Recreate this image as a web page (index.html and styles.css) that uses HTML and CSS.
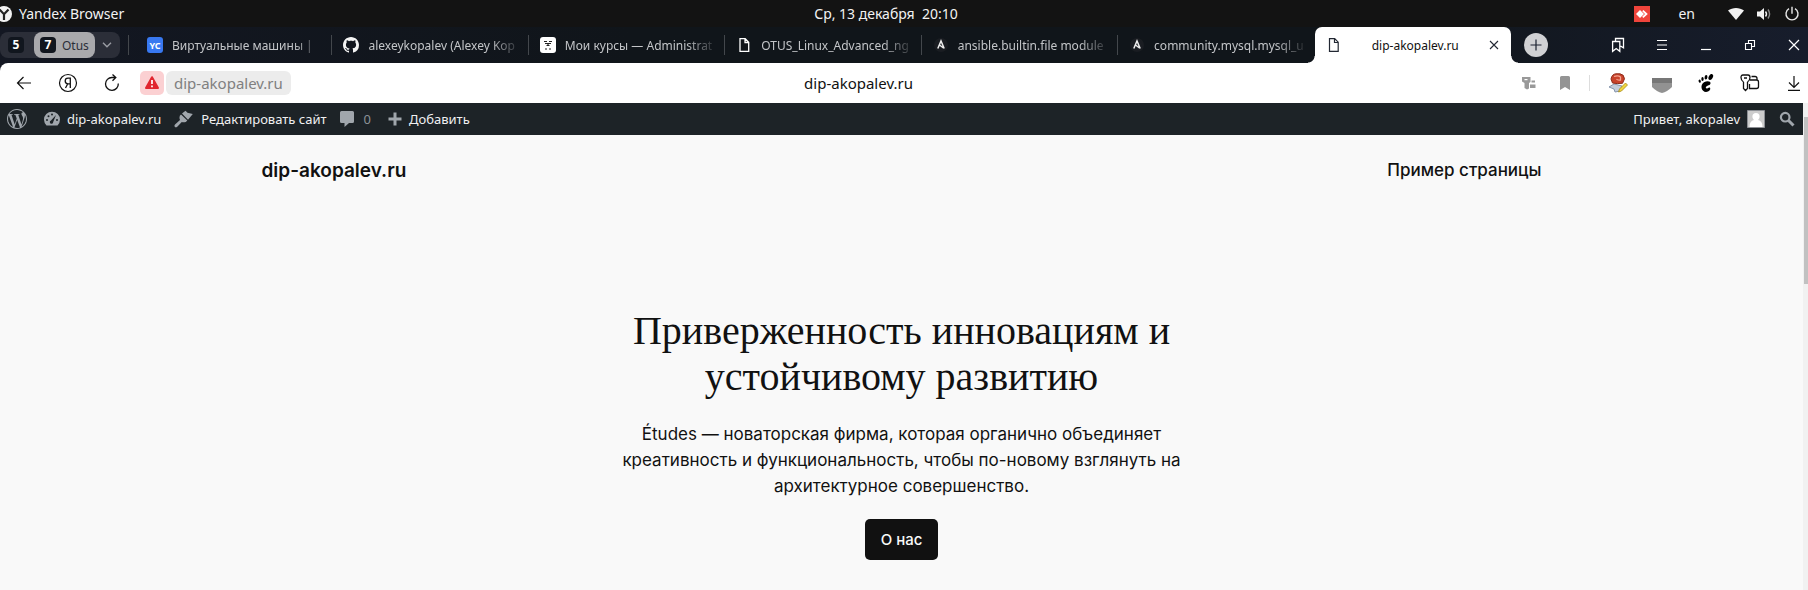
FILE: index.html
```html
<!DOCTYPE html>
<html lang="ru">
<head>
<meta charset="utf-8">
<meta name="viewport" content="width=device-width, initial-scale=1">
<title>dip-akopalev.ru</title>
<link rel="stylesheet" href="styles.css">
</head>
<body>
<div class="desktop-bar">
  <div class="desktop-app">
    <svg class="app-logo" width="16" height="16" viewBox="0 0 16 16"><circle cx="8" cy="8" r="8" fill="#f2f2f2"/><path d="M3.500 3.500 8 8.200l4.500-4.700M8 8v6" fill="none" stroke="#222" stroke-width="2.200"/></svg>
    <span>Yandex Browser</span>
  </div>
  <time class="clock">Ср, 13 декабря&nbsp; 20:10</time>
  <div class="tray">
    <svg width="16" height="16" viewBox="0 0 16 16"><path fill="#ef443b" d="M0 0h16v16H0z"/><path fill="#fff" d="m6 4 4 4-4 4-4-4z"/><path fill="#fff" d="m8.200 5.200 1.200-1.200L13.800 8l-4.400 4-1.200-1.200L11 8z"/></svg>
    <span class="lang">en</span>
    <div class="status">
      <svg width="16" height="16" viewBox="0 0 16 16"><path fill="#f2f2f2" d="M0 4.500C4.500 1 11.500 1 16 4.500L8 14z"/></svg>
      <svg width="16" height="16" viewBox="0 0 16 16"><path fill="#f2f2f2" d="M1 5.500h3L8 2v12l-4-3.500H1z"/><path d="M9.500 5.500q2 2.500 0 5" fill="none" stroke="#f2f2f2" stroke-width="1.400"/><path d="M12 3.500q3.200 4.500 0 9" fill="none" stroke="#888" stroke-width="1.400"/></svg>
      <svg width="16" height="16" viewBox="0 0 16 16"><path d="M5 2.700a6 6 0 1 0 6 0M8 .8v7" fill="none" stroke="#e8e8e8" stroke-width="1.400"/></svg>
    </div>
  </div>
</div>

<div class="tab-strip">
  <div class="tab-groups">
    <button class="group"><span class="count">5</span></button>
    <button class="group group-open"><span class="count">7</span>Otus</button>
    <button class="group-more" aria-label="Группы"><svg width="10" height="6" viewBox="0 0 10 6"><path d="m1 .8 4 4 4-4" fill="none" stroke="#9a9ca3" stroke-width="1.400"/></svg></button>
  </div>
  <nav class="tabs">
    <a class="tab" href="#"><svg width="16" height="16" viewBox="0 0 16 16"><rect width="16" height="16" rx="3" fill="#3878f0"/><text x="8" y="11.500" class="yc" text-anchor="middle">YC</text></svg><span class="tab-title">Виртуальные машины |</span></a>
    <a class="tab" href="#"><svg width="16" height="16" viewBox="0 0 16 16"><path fill="#f4f4f4" d="M8 0C3.580 0 0 3.580 0 8c0 3.540 2.290 6.530 5.470 7.590.4.070.55-.17.55-.38 0-.19-.01-.82-.01-1.490-2.010.37-2.530-.49-2.690-.94-.09-.23-.48-.94-.82-1.130-.28-.15-.68-.52-.01-.53.63-.01 1.080.58 1.230.82.72 1.210 1.870.87 2.330.66.070-.52.28-.87.51-1.070-1.780-.2-3.640-.89-3.640-3.950 0-.87.31-1.590.82-2.150-.08-.2-.36-1.020.08-2.120 0 0 .67-.21 2.200.82.64-.18 1.320-.27 2-.27s1.360.09 2 .27c1.530-1.040 2.200-.82 2.200-.82.44 1.100.16 1.920.08 2.120.51.56.82 1.270.82 2.150 0 3.070-1.870 3.750-3.650 3.950.29.25.54.73.54 1.480 0 1.070-.01 1.930-.01 2.200 0 .21.15.46.55.38A8.010 8.010 0 0 0 16 8c0-4.420-3.580-8-8-8z"/></svg><span class="tab-title">alexeykopalev (Alexey Kop</span></a>
    <a class="tab" href="#"><svg width="16" height="16" viewBox="0 0 16 16"><rect width="16" height="16" rx="3" fill="#fff"/><path d="M4 4.500h3M9 4.500h3M5 6.500h6M8 6v3M6.500 8.500h3M5 12h2M9 12h2" stroke="#222" stroke-width="1.200"/></svg><span class="tab-title">Мои курсы — Administrat</span></a>
    <a class="tab" href="#"><svg width="16" height="16" viewBox="0 0 16 16"><path d="M4 1.700h5.200l3.500 3.500v9.100H4zM9 2v3.500h3.500" fill="none" stroke="#fff" stroke-width="1.300"/></svg><span class="tab-title">OTUS_Linux_Advanced_ng</span></a>
    <a class="tab" href="#"><svg width="16" height="16" viewBox="0 0 16 16"><circle cx="8" cy="8" r="7" fill="#1a1d22"/><path d="M4.800 11.500 8 4l3.200 7.500M6.500 8l4 3" fill="none" stroke="#eee" stroke-width="1.500"/></svg><span class="tab-title">ansible.builtin.file module</span></a>
    <a class="tab" href="#"><svg width="16" height="16" viewBox="0 0 16 16"><circle cx="8" cy="8" r="7" fill="#1a1d22"/><path d="M4.800 11.500 8 4l3.200 7.500M6.500 8l4 3" fill="none" stroke="#eee" stroke-width="1.500"/></svg><span class="tab-title">community.mysql.mysql_u</span></a>
    <div class="tab tab-active"><svg width="16" height="16" viewBox="0 0 16 16"><path d="M3.500 1.700h5.200l3.500 3.500v9.100H3.500zM8.500 2v3.500H12" fill="none" stroke="#222833" stroke-width="1.200"/></svg><span class="active-title">dip-akopalev.ru</span><button class="tab-close" aria-label="Закрыть вкладку"><svg width="10" height="10" viewBox="0 0 10 10"><path d="m1 1 8 8M9 1 1 9" stroke="#222833" stroke-width="1.100"/></svg></button></div>
  </nav>
  <button class="new-tab" aria-label="Новая вкладка"><svg width="12" height="12" viewBox="0 0 12 12"><path d="M6 .5v11M.5 6h11" stroke="#1a2130" stroke-width="1.200"/></svg></button>
  <div class="window-controls">
    <button class="tool" aria-label="Коллекции"><svg width="14" height="16" viewBox="0 0 14 16"><path d="M1.600 4.500h7.200v9.800L5.200 11.500l-3.600 2.800zM4.500 4V1.500h8v9.300L9.500 9" fill="none" stroke="#fff" stroke-width="1.300"/></svg></button>
    <button class="tool" aria-label="Меню"><svg width="12" height="12" viewBox="0 0 12 12"><path d="M1 1.500h10M1 6h10M1 10.500h10" stroke="#fff" stroke-width="1.200"/></svg></button>
    <button class="tool" aria-label="Свернуть"><svg width="12" height="12" viewBox="0 0 12 12"><path d="M1 10.500h10" stroke="#fff" stroke-width="1.200"/></svg></button>
    <button class="tool" aria-label="Развернуть"><svg width="12" height="12" viewBox="0 0 12 12"><path d="M1.500 4.500h6v6h-6zM4.500 4V1.500h6v6H8" fill="none" stroke="#fff" stroke-width="1.100"/></svg></button>
    <button class="tool" aria-label="Закрыть"><svg width="12" height="12" viewBox="0 0 12 12"><path d="m1 1 10 10M11 1 1 11" stroke="#fff" stroke-width="1.200"/></svg></button>
  </div>
</div>

<div class="toolbar">
  <button class="tool" aria-label="Назад"><svg width="16" height="14" viewBox="0 0 16 14"><path d="M15 7H1.500M7.500 1l-6 6 6 6" fill="none" stroke="#111" stroke-width="1.200"/></svg></button>
  <button class="tool" aria-label="Яндекс"><svg width="20" height="20" viewBox="0 0 20 20"><circle cx="10" cy="10" r="8.500" fill="none" stroke="#111" stroke-width="1.200"/><path d="M12.300 15V5.200H10a2.800 2.800 0 0 0 0 5.600h2.300M9.800 10.800 7.500 15" fill="none" stroke="#111" stroke-width="1.300"/></svg></button>
  <button class="tool" aria-label="Обновить"><svg width="18" height="18" viewBox="0 0 18 18"><path d="M15.300 9.500A6.400 6.400 0 1 1 9 3.500h3.800M9.500.5l3.300 3-3.300 3.200" fill="none" stroke="#111" stroke-width="1.300"/></svg></button>
  <div class="address">
    <div class="address-site">
      <button class="warning" aria-label="Небезопасное соединение"><svg width="14" height="14" viewBox="0 0 14 14"><path d="M7 1.200 13 12H1z" fill="#e1252f" stroke="#e1252f" stroke-width="2" stroke-linejoin="round"/><path d="M7 4v4M7 9.500v1.800" stroke="#fff" stroke-width="1.700"/></svg></button>
      <button class="domain">dip-akopalev.ru</button>
    </div>
    <span class="page-title">dip-akopalev.ru</span>
    <div class="address-tools">
      <button class="mini" aria-label="Пароли"><svg width="14" height="14" viewBox="0 0 14 14"><path fill="#999" d="M0 1h8.500v5L7 7v5.500L5 13.500 2.500 12V7L0 5.500zM9.500 4.500h3.500v2H9.500zM8 8.500h5.500V12H8z"/><path fill="#fff" d="M2.500 3h3v1.200h-3z"/></svg></button>
      <button class="mini" aria-label="Закладка"><svg width="10" height="14" viewBox="0 0 10 14"><path fill="#949494" d="M0 1.500Q0 0 1.500 0h7Q10 0 10 1.500V14l-5-3-5 3z"/></svg></button>
    </div>
  </div>
  <div class="extensions">
    <button class="tool" aria-label="Редактор"><svg width="20" height="20" viewBox="0 0 20 20"><path fill="#c3ccda" stroke="#8796ad" d="m1 14 5-3 8 2-2 5-5 1-1-3z"/><path fill="#c8422b" stroke="#8e2b1a" d="M3 6Q4 1 8 .8h4q4 .5 4.500 5l-2 4.500Q9 11 4.500 10z"/><path fill="none" stroke="#f5a591" stroke-width="1.300" d="M6 3.500q4-1.500 6.500.5v3q-3 .5-4-1"/><path fill="#f1d53d" stroke="#a78b1d" stroke-width=".8" d="m10.500 19 1-3 6-6 2 2-6 6z"/></svg></button>
    <button class="tool" aria-label="Защита"><svg width="20" height="20" viewBox="0 0 20 20"><path fill="#777" d="M0 5h20v5H0z"/><path fill="#929292" d="M0 10h20v4q-5 5-10 6Q5 19 0 14z"/></svg></button>
    <button class="tool" aria-label="GNOME"><svg width="16" height="18" viewBox="0 0 16 18"><ellipse cx="12.800" cy="3" rx="2" ry="3.200" transform="rotate(28 12.800 3)"/><ellipse cx="8" cy="3.300" rx="1.400" ry="2.300" transform="rotate(10 8 3.300)"/><ellipse cx="4.500" cy="5" rx="1.200" ry="1.900"/><ellipse cx="1.700" cy="7.200" rx="1.100" ry="1.600" transform="rotate(-20 1.700 7.200)"/><path d="M12.500 9.500c.5-2.500-3.500-3.200-6.500-1.200-4.500 3-2.500 9.700 2 9.700 3 0 5-2.500 4-4.200-1-1.400-2.500 1.200-3.800.5-1-.7 0-2 1.300-2.500 1.500-.6 2.800-1 3-2.300z"/></svg></button>
    <button class="tool" aria-label="Менеджер паролей"><svg width="20" height="18" viewBox="0 0 20 18"><path d="M3.500 8V14.500l2 2 2-2V8M3.500 8Q1 6.500 1 3.500 1 1 3 1h5q2 0 2 2.500 0 3-2.500 4.500M4 4h3M11.500 2.500H15q2 0 2 2V6M10 6h6.500q2 0 2 2v4.500q0 2-2 2H9.500V10" fill="none" stroke="#111" stroke-width="1.300"/></svg></button>
    <button class="tool" aria-label="Загрузки"><svg width="14" height="16" viewBox="0 0 14 16"><path d="M7 1v11M2 7.500l5 5 5-5M1 15.300h12" fill="none" stroke="#111" stroke-width="1.200"/></svg></button>
  </div>
</div>

<div class="viewport">
  <div class="document">
    <div class="admin-bar">
      <a class="admin-item wp" href="#" aria-label="О WordPress"><svg width="20" height="20" viewBox="0 0 24 24"><path fill="#a0a6ac" d="M21.469 6.825c.84 1.537 1.318 3.300 1.318 5.175 0 3.979-2.156 7.456-5.363 9.325l3.295-9.527c.615-1.540.82-2.771.82-3.864 0-.405-.026-.78-.07-1.110m-7.981.105c.647-.03 1.232-.105 1.232-.105.582-.075.514-.93-.067-.899 0 0-1.755.135-2.880.135-1.064 0-2.850-.15-2.850-.15-.585-.03-.661.855-.075.885 0 0 .54.061 1.125.09l1.680 4.605-2.370 7.080L5.354 6.900c.649-.03 1.234-.1 1.234-.1.585-.075.516-.93-.065-.896 0 0-1.746.138-2.874.138-.2 0-.438-.008-.69-.015C4.911 3.150 8.235 1.215 12 1.215c2.809 0 5.365 1.072 7.286 2.833-.046-.003-.091-.009-.141-.009-1.060 0-1.812.923-1.812 1.914 0 .89.513 1.643 1.060 2.531.411.72.89 1.643.89 2.977 0 .915-.354 1.994-.821 3.479l-1.075 3.585-3.900-11.610.001.014zM12 22.784c-1.059 0-2.081-.153-3.048-.437l3.237-9.406 3.315 9.087c.024.053.05.101.078.149-1.120.393-2.325.609-3.582.609M1.211 12c0-1.564.336-3.050.935-4.390L7.290 21.709C3.694 19.960 1.212 16.271 1.211 12M12 0C5.385 0 0 5.385 0 12s5.385 12 12 12 12-5.385 12-12S18.615 0 12 0"/></svg></a>
      <a class="admin-item" href="#"><svg width="16" height="16" viewBox="0 0 16 16"><path fill="#a0a6ac" d="M2.500 14.500A8 8 0 1 1 13.500 14.500z"/><g fill="#1d2327"><circle cx="3" cy="9" r="1"/><circle cx="4.500" cy="5.300" r="1"/><circle cx="8" cy="3.500" r="1"/><circle cx="13" cy="9" r="1"/><path d="m12 4-2.800 7a1.700 1.700 0 1 1-2.200-1.500z"/></g></svg>dip-akopalev.ru</a>
      <a class="admin-item" href="#"><svg width="20" height="18" viewBox="0 0 20 18"><path fill="#a0a6ac" d="M8 3.500 11.500.8l2 2L18.800 4 14 9.800zM7 4.500l6.300 6-1.500 1.500q-2.500.5-4 0L3 17q-1.500.8-2.300-.3Q0 15.500 1 14.500L6 10Q5 8 5.800 5.800z"/></svg>Редактировать сайт</a>
      <a class="admin-item muted" href="#"><svg width="14" height="16" viewBox="0 0 14 16"><path fill="#a0a6ac" d="M1.500 0h11Q14 0 14 1.500v9q0 1.500-1.500 1.500H9l-4.500 4V12h-3Q0 12 0 10.500v-9Q0 0 1.500 0z"/></svg>0</a>
      <a class="admin-item" href="#"><svg width="14" height="14" viewBox="0 0 14 14"><path d="M7 .5v13M.5 7h13" stroke="#a0a6ac" stroke-width="3"/></svg>Добавить</a>
      <a class="admin-item account" href="#">Привет, akopalev<svg width="18" height="18" viewBox="0 0 18 18"><path fill="#ccc" stroke="#8c8f94" d="M.5.500h17v17H.5z"/><path fill="#fff" d="M9 3a3.600 3.600 0 0 1 3.600 3.600c0 1.600-.8 2.700-1.600 3.400 3 .8 4.500 3 4.500 7h-13c0-4 1.500-6.200 4.500-7-.8-.7-1.600-1.800-1.600-3.400A3.600 3.600 0 0 1 9 3z"/></svg></a>
      <button class="search" aria-label="Поиск"><svg width="16" height="16" viewBox="0 0 16 16"><circle cx="6.200" cy="6.200" r="4.300" fill="none" stroke="#a0a6ac" stroke-width="2.200"/><path d="m9.500 9.500 5 5" stroke="#a0a6ac" stroke-width="3"/></svg></button>
    </div>
    <header class="site-header">
      <a class="site-name" href="#">dip-akopalev.ru</a>
      <nav><a class="site-link" href="#">Пример страницы</a></nav>
    </header>
    <main class="hero">
      <h1>Приверженность инновациям и устойчивому развитию</h1>
      <p>Études — новаторская фирма, которая органично объединяет креативность и функциональность, чтобы по-новому взглянуть на архитектурное совершенство.</p>
      <a class="cta" href="#">О нас</a>
    </main>
  </div>
  <div class="scrollbar"><div class="thumb"></div></div>
</div>
</body>
</html>
```
FILE: styles.css
```css
* { box-sizing: border-box; }
body {
  margin: 0;
  min-height: 100vh;
  display: flex;
  flex-direction: column;
  background: #f9f9f9;
  font-family: "Noto Sans", "Open Sans", sans-serif;
  font-size: 12px;
  color: #111;
}
a { color: inherit; text-decoration: none; }
button {
  margin: 0;
  padding: 0;
  border: 0;
  background: none;
  font: inherit;
  color: inherit;
}
svg { display: block; flex: none; }

.desktop-bar {
  display: grid;
  grid-template-columns: 1fr auto 1fr;
  align-items: center;
  height: 27px;
  padding-right: 8px;
  background: #131313;
  color: #f2f2f2;
  font-size: 14px;
  line-height: 20px;
}
.desktop-app { display: flex; align-items: center; gap: 7px; }
.app-logo { margin-left: -4px; }
.clock { padding-right: 28px; }
.tray { display: flex; justify-content: flex-end; align-items: center; }
.lang { margin: 0 33px 0 28px; }
.status { display: flex; gap: 12px; }

.tab-strip {
  display: flex;
  align-items: center;
  height: 36px;
  background: linear-gradient(90deg, #131722, #10151a 35%, #10151a 75%, #171d2c);
  color: #c3c5c8;
}
.tab-groups {
  display: flex;
  align-items: center;
  width: 120px;
  height: 26px;
  border-radius: 8px;
  background: #2b2e38;
}
.group { display: flex; align-items: center; height: 26px; padding: 0 10px 0 8px; }
.group-open {
  gap: 6px;
  padding: 0 6px;
  border-radius: 8px;
  background: #a9a9ac;
  color: #2b2e38;
}
.count {
  width: 16px;
  border-radius: 4px;
  background: #11161e;
  color: #fff;
  font-weight: 700;
  line-height: 16px;
  text-align: center;
}
.group-more { display: grid; place-items: center; flex: 1; height: 26px; }
.tabs {
  flex: 0 1 1383px;
  min-width: 0;
  display: flex;
  align-self: stretch;
  margin-left: 8px;
  padding-left: 8px;
  background: linear-gradient(#43474c, #43474c) 0 8px / 1px 20px no-repeat;
}
.tab {
  flex: 1 1 0;
  min-width: 0;
  display: flex;
  align-items: center;
  gap: 9px;
  padding: 0 7px 0 11px;
  background: linear-gradient(#43474c, #43474c) 100% 8px / 1px 20px no-repeat;
}
.tab:nth-child(6) { background: none; }
.tab-title {
  flex: 1;
  overflow: hidden;
  white-space: nowrap;
  -webkit-mask-image: linear-gradient(90deg, #000 calc(100% - 32px), transparent);
  mask-image: linear-gradient(90deg, #000 calc(100% - 32px), transparent);
}
.yc { font: 700 9px "Noto Sans", sans-serif; fill: #fff; }
.tab-active {
  position: relative;
  border-radius: 7px 7px 0 0;
  background: #fff;
  color: #111;
}
.tab-active::before,
.tab-active::after {
  content: "";
  position: absolute;
  bottom: 0;
  width: 7px;
  height: 7px;
}
.tab-active::before { right: 100%; background: radial-gradient(circle at 0 0, transparent 6px, #fff 7px); }
.tab-active::after { left: 100%; background: radial-gradient(circle at 100% 0, transparent 6px, #fff 7px); }
.active-title { flex: 1; text-align: center; }
.tab-close { margin-right: 5px; }
.new-tab {
  display: grid;
  place-items: center;
  width: 24px;
  height: 24px;
  margin-left: 13px;
  border-radius: 50%;
  background: #d0d1d4;
}
.window-controls { display: flex; margin-left: auto; margin-right: -8px; }
.tool { display: grid; place-items: center; width: 44px; height: 36px; }

.toolbar {
  display: flex;
  align-items: center;
  height: 40px;
  padding-left: 2px;
  border-top-left-radius: 8px;
  background: #fff;
  box-shadow: -8px -8px 0 #131722;
  clip-path: inset(0);
}
.address {
  flex: 1;
  display: grid;
  grid-template-columns: 1fr auto 1fr;
  align-items: center;
  margin: 0 12px 0 6px;
  font-size: 15px;
  line-height: 24px;
}
.address-site { display: flex; gap: 2px; }
.warning {
  display: grid;
  place-items: center;
  width: 24px;
  height: 24px;
  border-radius: 5px;
  background: #fbd0d2;
}
.domain { padding: 0 8px; border-radius: 6px; background: #ececec; color: #808080; }
.address-tools { display: flex; justify-content: flex-end; gap: 12px; }
.mini { display: grid; place-items: center; width: 24px; height: 24px; }
.extensions {
  display: flex;
  padding-left: 7px;
  margin-right: -8px;
  background: linear-gradient(#ddd, #ddd) 0 50% / 1px 16px no-repeat;
}

.viewport { flex: 1; display: flex; }
.document { flex: 1; min-width: 0; }
.admin-bar {
  display: flex;
  align-items: center;
  gap: 13px;
  height: 32px;
  padding: 0 7px;
  background: #1d2327;
  color: #f0f0f1;
  font-size: 13px;
}
.admin-item { display: flex; align-items: center; gap: 7px; white-space: nowrap; }
.wp { margin-right: 4px; }
.muted { gap: 10px; margin-right: 4px; color: #8c9196; }
.account { margin-left: auto; }
.search { display: grid; place-items: center; width: 18px; height: 32px; }

.site-header {
  display: flex;
  justify-content: space-between;
  align-items: center;
  max-width: 1280px;
  height: 70px;
  margin: 0 auto;
  font-family: Inter, sans-serif;
}
.site-name { font-size: 19px; font-weight: 600; }
.site-link { font-size: 17px; font-weight: 500; }
.hero {
  display: flex;
  flex-direction: column;
  align-items: center;
  max-width: 566px;
  margin: 0 auto;
  padding: 103px 0 30px;
  text-align: center;
}
h1 {
  margin: 0;
  font: 400 40px/46px "Liberation Serif", serif;
}
p { margin: 21px 0 20px; font: 400 17px/26px Inter, sans-serif; }
.cta {
  padding: 10px 16px;
  border-radius: 5px;
  background: #111;
  color: #f9f9f9;
  font: 500 15px/21px Inter, sans-serif;
}
.scrollbar { width: 5px; padding: 14px 0 0 1px; background: #f1f1f1; }
.thumb { height: 167px; background: #c1c1c1; }
```
